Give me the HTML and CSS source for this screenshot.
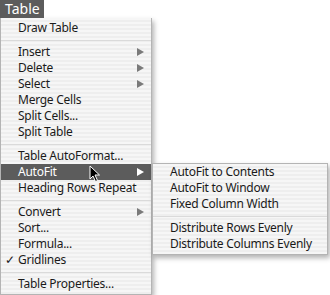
FILE: index.html
```html
<!DOCTYPE html>
<html lang="en">
<head>
    <meta charset="UTF-8">
    <title>Table Menu</title>
    <link rel="stylesheet" href="styles.css">
</head>
<body>

<div class="menubar">
    <span class="tab">Table</span>
</div>

<ul class="menu">
    <li class="item">Draw Table</li>
    <li class="sep"></li>
    <li class="item sub">Insert</li>
    <li class="item sub">Delete</li>
    <li class="item sub">Select</li>
    <li class="item">Merge Cells</li>
    <li class="item">Split Cells...</li>
    <li class="item">Split Table</li>
    <li class="sep"></li>
    <li class="item">Table AutoFormat...</li>
    <li class="item sub active">AutoFit
        <svg class="cursor" width="12" height="18" viewBox="0 0 12 18">
            <path d="M1 1 L1 14 L4 11 L6.5 16.5 L8.5 15.5 L6 10 L10.5 10 Z" fill="#000" stroke="#fff" stroke-width="1"/>
        </svg>
        <ul class="menu submenu">
            <li class="item">AutoFit to Contents</li>
            <li class="item">AutoFit to Window</li>
            <li class="item">Fixed Column Width</li>
            <li class="sep"></li>
            <li class="item">Distribute Rows Evenly</li>
            <li class="item">Distribute Columns Evenly</li>
        </ul>
    </li>
    <li class="item">Heading Rows Repeat</li>
    <li class="sep"></li>
    <li class="item sub">Convert</li>
    <li class="item">Sort...</li>
    <li class="item">Formula...</li>
    <li class="item checked">Gridlines</li>
    <li class="sep"></li>
    <li class="item">Table Properties...</li>
</ul>

</body>
</html>
```

FILE: styles.css
```css
body {
    margin: 0;
    background-color: #fff;
    font-family: "Noto Sans", "Lucida Grande", sans-serif;
    font-size: 12px;
    letter-spacing: -0.25px;
    color: #1a1a1a;
}
.menubar {
    height: 18px;
}
.tab {
    display: inline-block;
    width: 44px;
    height: 18px;
    line-height: 17px;
    box-sizing: border-box;
    padding-left: 5px;
    background-color: #5c5c5c;
    color: #fff;
    font-size: 14px;
    letter-spacing: 0;
}
.menu {
    list-style: none;
    margin: 0;
    padding: 2px 0;
    width: 152px;
    box-sizing: border-box;
    border: 1px solid #b4b4b4;
    border-top: none;
    background-color: #f3f3f3;
    background-image: repeating-linear-gradient(to bottom, #f6f6f6 0, #f6f6f6 2px, #eeeeee 2px, #eeeeee 4px);
    box-shadow: 2px 3px 5px rgba(0, 0, 0, 0.3);
}
.item {
    position: relative;
    height: 16px;
    line-height: 16px;
    padding-left: 17px;
    white-space: nowrap;
}
.sep {
    height: 8px;
    position: relative;
}
.sep::after {
    content: "";
    position: absolute;
    left: 0;
    right: 0;
    top: 4px;
    border-top: 1px solid #dadada;
}
.sub::before {
    content: "";
    position: absolute;
    right: 7px;
    top: 4px;
    border-left: 7px solid #7a7a7a;
    border-top: 4px solid transparent;
    border-bottom: 4px solid transparent;
}
.active {
    background-color: #5c5c5c;
    color: #fff;
}
.active::before {
    border-left-color: #fff;
}
.checked::after {
    content: "\2713";
    position: absolute;
    left: 4px;
    top: 0;
}
.cursor {
    position: absolute;
    left: 88px;
    top: 1px;
}
.submenu {
    position: absolute;
    left: 100%;
    top: -1px;
    margin-left: 1px;
    width: 176px;
    border-top: 1px solid #b4b4b4;
    padding-top: 0;
    color: #1a1a1a;
}
```
